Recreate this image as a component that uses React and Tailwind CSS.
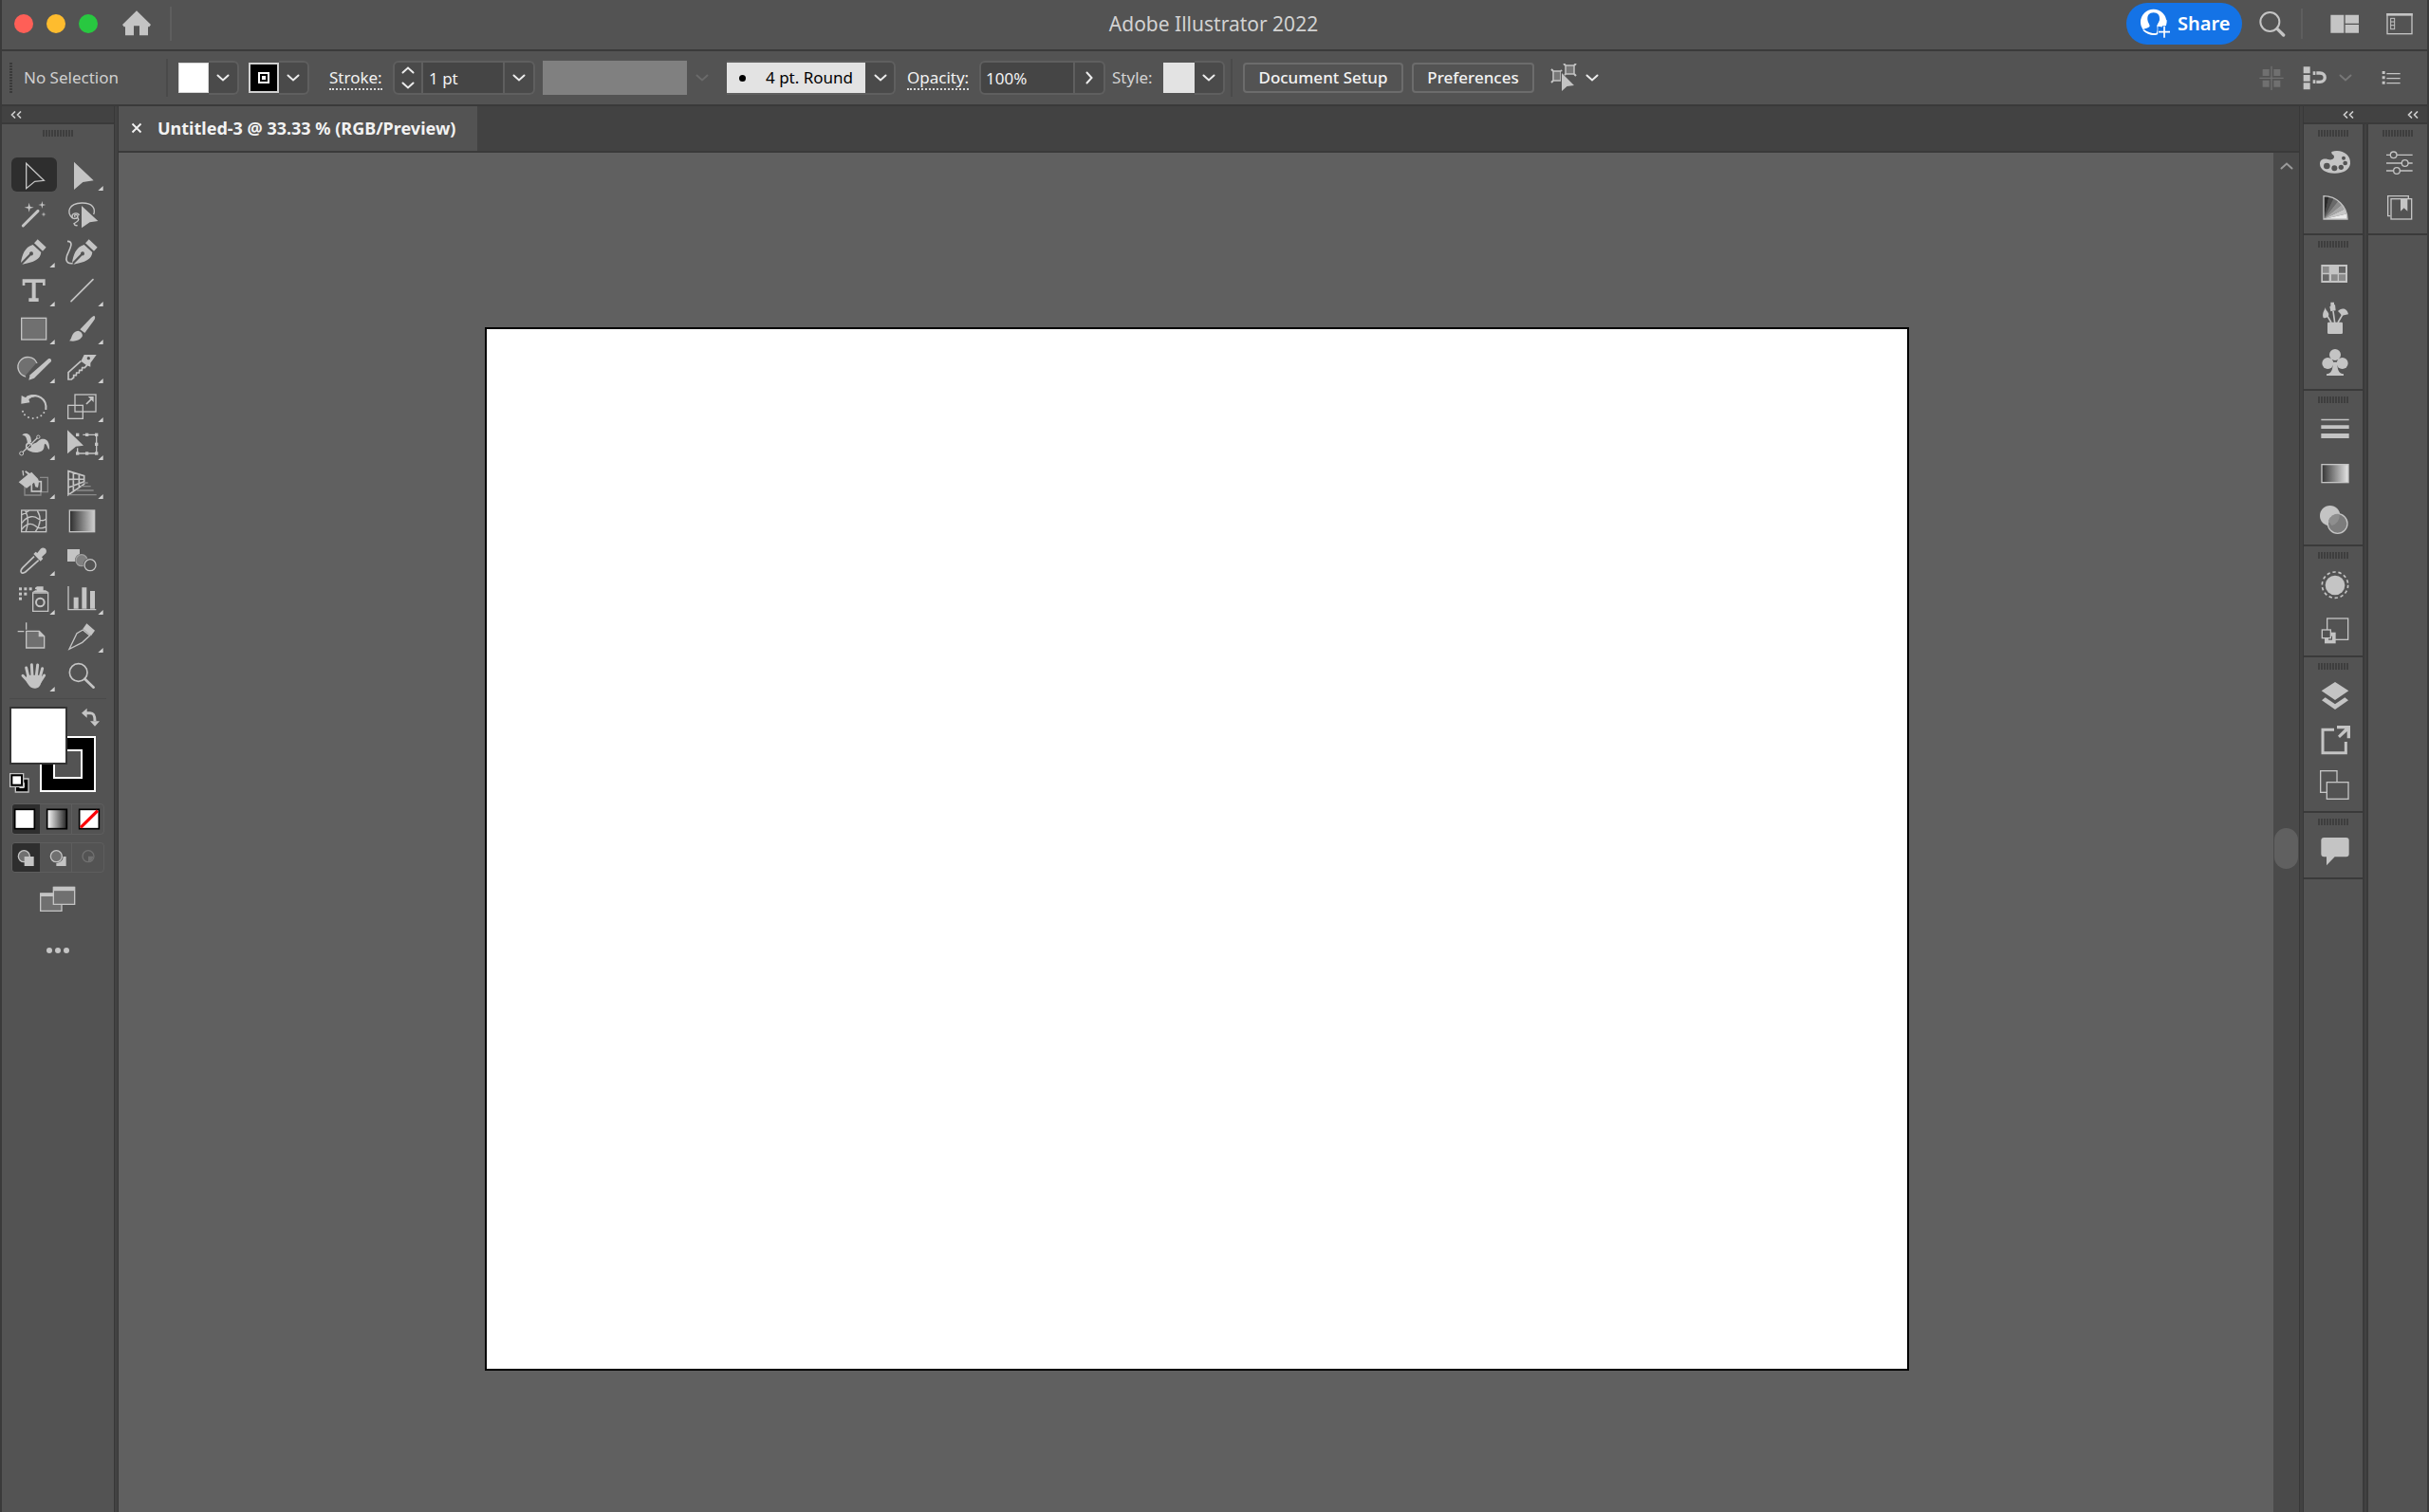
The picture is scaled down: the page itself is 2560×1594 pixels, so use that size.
import React from "react";

const C = "#c4c4c4";

function Star({ x, y, r }) {
  const q = r / 5;
  return (
    <polygon
      fill={C}
      points={`${x},${y - r} ${x + q},${y - q} ${x + r},${y} ${x + q},${y + q} ${x},${y + r} ${x - q},${y + q} ${x - r},${y} ${x - q},${y - q}`}
    />
  );
}

function Nib({ dx }) {
  return (
    <g transform={`translate(${dx} 0)`}>
      <path d="M119 428 L146 453 L135 465 L108 440 Z" fill={C} />
      <path d="M104 445 L130 469 C127 492 108 500 70 507 L98 479 A6 6 0 1 0 93 474 L66 502 C70 478 78 452 104 445 Z" fill={C} />
    </g>
  );
}

function Tool({ label, x, y, menu, active, children }) {
  return (
    <button
      type="button"
      aria-label={label}
      aria-pressed={!!active}
      className={active ? "h-9 w-12 rounded-md bg-[#2e2e2e]" : "h-9 w-12 rounded-md"}
    >
      <svg className="h-9 w-12" viewBox={`${x} ${y} 144 108`} fill="none" stroke="none">
        {children}
        {menu && <polygon fill="#d0d0d0" points={`${x + 137},${y + 90} ${x + 137},${y + 105} ${x + 121},${y + 105}`} />}
      </svg>
    </button>
  );
}

function Tools() {
  const L = 36;
  const R = 189;
  return (
    <div className="grid h-[564px] grid-cols-[48px_48px] content-between gap-x-[3px]">
      <Tool label="Selection" x={L} y={168} active>
        <path d="M83 187 L139 241 L110 244 L83 266 Z" stroke={C} strokeWidth="4" />
      </Tool>
      <Tool label="Direct Selection" x={R} y={168} menu>
        <path d="M234 182 L296 241 L262 246 L234 270 Z" fill={C} />
      </Tool>

      <Tool label="Magic Wand" x={L} y={290}>
        <path d="M73 383 L120 336" stroke={C} strokeWidth="9" strokeLinecap="round" />
        <Star x={92} y={325} r={15} />
        <Star x={133} y={317} r={12} />
        <Star x={138} y={347} r={8} />
      </Tool>
      <Tool label="Lasso" x={R} y={290}>
        <path d="M230 360 C208 340 218 312 258 311 C292 310 303 328 296 347" stroke={C} strokeWidth="4" />
        <path d="M250 350 C248 340 228 342 228 353 C228 364 246 362 246 352 C240 344 232 350 238 355 M246 358 C254 366 240 372 234 376 C236 382 240 383 245 382" stroke={C} strokeWidth="4" />
        <path d="M258 320 L310 368 L284 372 L258 390 Z" fill={C} />
      </Tool>

      <Tool label="Pen" x={L} y={412} menu>
        <Nib dx={0} />
      </Tool>
      <Tool label="Curvature" x={R} y={412}>
        <Nib dx={162} />
        <path d="M213 434 C232 434 224 452 217 467 C207 486 204 506 230 504" stroke={C} strokeWidth="5" />
      </Tool>

      <Tool label="Type" x={L} y={534} menu>
        <path d="M71 553 H143 V573 H135 V564 H113 V613 H122 V624 H91 V613 H101 V564 H79 V573 H71 Z" fill={C} />
      </Tool>
      <Tool label="Line Segment" x={R} y={534} menu>
        <path d="M225 623 L294 554" stroke={C} strokeWidth="5" strokeLinecap="round" />
      </Tool>

      <Tool label="Rectangle" x={L} y={25} menu>
        <rect x="68" y="47" width="78" height="68" fill="#707070" stroke={C} strokeWidth="4" />
      </Tool>
      <Tool label="Paintbrush" x={R} y={25} menu>
        <path d="M298 40 C302 42 301 48 297 54 L268 94 L253 83 L286 48 C290 44 294 41 298 40 Z" fill={C} />
        <path d="M247 87 C258 90 264 99 259 107 C251 119 236 122 219 119 C230 111 223 92 247 87 Z" fill={C} />
      </Tool>

      <Tool label="Shaper" x={L} y={147} menu>
        <path d="M82 231 A31 31 0 1 1 117 190" fill="#707070" stroke={C} strokeWidth="4" />
        <path d="M82 231 L117 190" stroke="#535353" strokeWidth="6" />
        <path d="M153 175 C158 172 165 178 161 184 L108 236 L91 242 L95 226 Z" fill={C} />
      </Tool>
      <Tool label="Eraser" x={R} y={147} menu>
        <path d="M256 182 L266 162 H305 L286 188 V200 L272 194 Z" fill={C} />
        <circle cx="280" cy="173" r="5" fill="#535353" />
        <path d="M256 182 L216 218 V240 H226 L233 234 V227 H241 L242 219 H250 L251 211 H259 L260 203 H268 L276 194" stroke={C} strokeWidth="5" />
      </Tool>

      <Tool label="Rotate" x={L} y={269} menu>
        <path d="M86 299 C118 279 149 300 145 335" stroke={C} strokeWidth="6" />
        <path d="M84 292 C98 285 112 286 120 291 L100 296 L86 305 Z" fill={C} />
        <path d="M68 290 L80 296 L88 292 L94 312 L67 316 Z" fill={C} />
        {[[72, 340], [78, 351], [90, 359], [104, 362], [118, 360], [130, 354], [139, 344]].map(([a, b]) => (
          <circle key={a} cx={a} cy={b} r="3" fill={C} />
        ))}
      </Tool>
      <Tool label="Scale" x={R} y={269} menu>
        <rect x="237" y="287" width="66" height="54" stroke={C} strokeWidth="4" />
        <rect x="215" y="321" width="47" height="42" stroke={C} strokeWidth="4" />
        <path d="M273 317 L290 300" stroke={C} strokeWidth="5" />
        <path d="M278 293 H296 V311 Z" fill={C} />
      </Tool>

      <Tool label="Width" x={L} y={391} menu>
        <path d="M70 416 C84 406 98 416 98 430 C99 440 104 446 112 442 C122 436 124 428 138 429 C150 431 157 440 156 462 C150 462 150 446 142 444 C138 450 142 458 134 466 C118 476 96 474 78 458 C92 452 86 434 82 424 C78 418 74 420 70 416 Z" fill={C} />
        <path d="M68 475 L121 423" stroke="#535353" strokeWidth="9" />
        <path d="M68 475 L121 423" stroke={C} strokeWidth="4" />
        <circle cx="92" cy="452" r="9" fill="#535353" stroke={C} strokeWidth="5" />
        <circle cx="68" cy="475" r="6" fill="#535353" stroke={C} strokeWidth="3" />
        <circle cx="121" cy="423" r="5" fill="#535353" stroke={C} strokeWidth="3" />
        <path d="M86 458 L98 446" stroke={C} strokeWidth="3" />
      </Tool>
      <Tool label="Free Transform" x={R} y={391} menu>
        <path d="M262 416 H305 V475 H245 V458" stroke={C} strokeWidth="4" />
        {[[245, 416], [275, 416], [305, 416], [305, 446], [245, 475], [275, 475], [305, 475]].map(([a, b]) => (
          <rect key={`${a}-${b}`} x={a - 5} y={b - 5} width="10" height="10" fill={C} />
        ))}
        <path d="M213 401 L264 450 L240 453 L213 476 Z" fill={C} />
      </Tool>

      <Tool label="Live Paint Bucket" x={L} y={513} menu>
        <path d="M78 575 V606 H129 V596" stroke="#8a8a8a" strokeWidth="4" />
        <path d="M126 550 H151 V596 H126" stroke="#8a8a8a" strokeWidth="4" />
        <rect x="100" y="563" width="30" height="31" stroke={C} strokeWidth="5" />
        <path d="M59 565 L88 541 L78 532 L82 529 L94 537 L100 533 L120 554 C125 562 122 572 120 582 L112 580 L108 566 L84 584 Z" fill={C} />
        <path d="M72 528 L74 544" stroke={C} strokeWidth="4" />
      </Tool>
      <Tool label="Perspective Grid" x={R} y={513} menu>
        <path d="M216 530 L266 545 V571 L216 605 Z M216 556 L266 555 M216 582 L266 563 M232 535 V594 M250 540 V582" stroke={C} strokeWidth="5" />
        <path d="M264 567 H278 M256 578 H287 M242 591 H296 M218 605 H305" stroke="#8a8a8a" strokeWidth="4" />
      </Tool>

      <Tool label="Mesh" x={L} y={5}>
        <rect x="68" y="26" width="78" height="68" stroke={C} strokeWidth="4" />
        <path d="M80 27 C92 50 90 70 82 93 M118 27 C132 50 128 72 112 93 M69 66 C88 40 110 44 120 52 C130 60 138 60 145 54 M69 86 C84 66 100 66 110 74 C120 84 134 84 145 78 M69 40 C78 36 86 32 92 27" stroke={C} strokeWidth="4" />
      </Tool>
      <Tool label="Gradient" x={R} y={5}>
        <defs>
          <linearGradient id="gradTool"><stop stopColor="#2c2c2c" /><stop offset="1" stopColor="#d0d0d0" /></linearGradient>
        </defs>
        <rect x="220" y="26" width="79" height="68" fill="url(#gradTool)" stroke={C} strokeWidth="4" />
      </Tool>

      <Tool label="Eyedropper" x={L} y={126} menu>
        <path d="M108 170 L72 205 C66 212 64 218 68 221 C73 224 80 221 86 214 L122 182" stroke={C} strokeWidth="5" />
        <path d="M106 162 L113 155 L118 159 L128 146 C138 136 152 148 145 160 L132 172 L136 177 L128 185 Z" fill={C} />
      </Tool>
      <Tool label="Blend" x={R} y={126}>
        <rect x="213" y="147" width="39" height="39" fill={C} />
        <circle cx="258" cy="182" r="21" fill="#535353" />
        <circle cx="258" cy="182" r="18" fill="#808080" stroke="#a0a0a0" strokeWidth="4" />
        <circle cx="285" cy="197" r="22" fill="#535353" />
        <circle cx="285" cy="197" r="18" stroke={C} strokeWidth="4" />
      </Tool>

      <Tool label="Symbol Sprayer" x={L} y={248} menu>
        {[[65, 272], [81, 272], [97, 272], [65, 288], [81, 288], [65, 303]].map(([a, b]) => (
          <rect key={`${a}-${b}`} x={a - 5} y={b - 5} width="9" height="9" fill={C} />
        ))}
        <path d="M111 268 L117 264 H137 V278 H117 V274 L111 272 Z" fill={C} />
        <path d="M104 284 H152 V342 H104 Z" stroke={C} strokeWidth="4" />
        <path d="M102 282 L112 276 H144 L154 282 Z" fill={C} />
        <circle cx="127" cy="314" r="13" stroke={C} strokeWidth="6" />
      </Tool>
      <Tool label="Column Graph" x={R} y={248} menu>
        <path d="M216 263 V337 H304" stroke={C} strokeWidth="4" />
        <path d="M233 298 H248 V334 H233 Z M259 267 H274 V334 H259 Z M285 278 H300 V334 H285 Z" fill={C} />
      </Tool>

      <Tool label="Artboard" x={L} y={370}>
        <path d="M83 380 V402 M56 408 H76" stroke={C} strokeWidth="4" />
        <path d="M83 407 H124 L140 423 V460 H83 Z" fill="#707070" stroke={C} strokeWidth="4" />
        <path d="M122 405 L142 425 H122 Z" fill={C} />
      </Tool>
      <Tool label="Slice" x={R} y={370} menu>
        <path d="M274 383 L300 405 L288 422 L262 400 Z" fill={C} />
        <path d="M262 403 L284 421 L260 443 L219 464 L243 414 Z" stroke={C} strokeWidth="4" />
      </Tool>

      <Tool label="Hand" x={L} y={492} menu>
        <path d="M90 552 L83 522 M102 548 L100 512 M115 548 L119 513 M126 554 L134 524 M88 564 L72 547 M127 566 L140 546" stroke={C} strokeWidth="9" strokeLinecap="round" />
        <path d="M86 545 H131 C134 566 128 586 112 587 C96 588 88 576 80 558 Z" fill={C} />
      </Tool>
      <Tool label="Zoom" x={R} y={492}>
        <circle cx="248" cy="537" r="28" stroke={C} strokeWidth="5" />
        <path d="M268 557 L296 584" stroke={C} strokeWidth="8" strokeLinecap="round" />
      </Tool>
    </div>
  );
}

function Chevron({ className = "text-[#ececec]" }) {
  return (
    <svg className={`h-3 w-4 ${className}`} viewBox="0 0 16 12" fill="none" stroke="currentColor" strokeWidth="2" strokeLinecap="round">
      <path d="M2.5 3.5 L8 8.5 L13.5 3.5" />
    </svg>
  );
}

function DropButton({ label, children }) {
  return (
    <button type="button" aria-label={label} className="grid h-9 w-8 shrink-0 place-items-center rounded-r-md border-2 border-l-0 border-[#5f5f5f] bg-[#4a4a4a]">
      {children || <Chevron />}
    </button>
  );
}

function Rule() {
  return <div className="h-10 w-[2px] shrink-0 bg-[#4a4a4a]" />;
}

function Grip() {
  return (
    <div className="mx-auto h-[7px] w-[33px] bg-[repeating-linear-gradient(90deg,#3e3e3e_0_2px,#535353_2px_3px)]" />
  );
}

function Collapse({ align }) {
  return (
    <button type="button" aria-label="Collapse panels" className={align === "left" ? "mr-auto ml-[9px]" : "ml-auto mr-[9px]"}>
      <svg className="h-2 w-3" viewBox="0 0 12 8" fill="none" stroke="#cfcfcf" strokeWidth="1.6">
        <path d="M5 0.5 L1.5 4 L5 7.5 M11 0.5 L7.5 4 L11 7.5" />
      </svg>
    </button>
  );
}

function TitleBar() {
  return (
    <header className="grid h-[54px] shrink-0 grid-cols-[1fr_auto_1fr] items-center border-b-2 border-[#3a3a3a] pr-[15px] pb-[3px] pl-[13px]">
      <div className="flex items-center">
        <div className="flex gap-[14px]">
          <button type="button" aria-label="Close window" className="size-5 rounded-full bg-[#ff5f57]" />
          <button type="button" aria-label="Minimize window" className="size-5 rounded-full bg-[#febc2e]" />
          <button type="button" aria-label="Zoom window" className="size-5 rounded-full bg-[#28c840]" />
        </div>
        <button type="button" aria-label="Home" className="ml-[26px]">
          <svg className="h-7 w-[30px]" viewBox="387 32 90 84" fill={C}>
            <path d="M432 33 L477 77 L472 84 H468 V111 H441 V81 H423 V111 H396 V84 H392 L387 77 Z" />
          </svg>
        </button>
        <div className="ml-5 h-9 w-[2px] bg-[#5e5e5e]" />
      </div>
      <h1 className="text-[21px] leading-7 text-[#d2d2d2]">Adobe Illustrator 2022</h1>
      <div className="flex items-center justify-end">
        <button type="button" className="flex h-11 w-[122px] items-center rounded-full bg-[#1473e6] pl-[14px] text-xl font-semibold text-white">
          <svg className="mr-2 h-8 w-8 shrink-0" viewBox="162 25 96 96">
            <circle cx="206" cy="68" r="41" fill="#fff" />
            <path d="M206 38 C192 38 186 47 187 60 C188 69 193 73 194 80 C192 88 178 88 172 92 C184 104 200 108 214 104 C218 98 219 92 217 80 C218 73 225 69 225 60 C226 47 220 38 206 38 Z" fill="#1473e6" />
            <path d="M174 93 C186 103 196 106 214 106" fill="none" stroke="#fff" strokeWidth="5" />
            <path d="M220 80 H258 V120 H220 Z" fill="#1473e6" />
            <path d="M217 80 C228 84 240 86 246 78 L248 62 L226 62 Z" fill="#fff" />
            <path d="M240 80 V118 M221 99 H258" fill="none" stroke="#1473e6" strokeWidth="13" />
            <path d="M240 81 V117 M222 99 H258" fill="none" stroke="#fff" strokeWidth="5" />
          </svg>
          Share
        </button>
        <button type="button" aria-label="Search" className="ml-[18px]">
          <svg className="size-7" viewBox="540 28 84 84" fill="none" stroke={C}>
            <circle cx="574" cy="64" r="30" strokeWidth="6" />
            <path d="M597 86 L617 106" strokeWidth="10" strokeLinecap="round" />
          </svg>
        </button>
        <div className="ml-4 h-8 w-[2px] bg-[#5e5e5e]" />
        <button type="button" aria-label="Arrange documents" className="ml-[29px]">
          <svg className="h-5 w-[30px]" viewBox="768 43 90 60" fill={C}>
            <path d="M769 45 H811 V102 H769 Z M815 45 H858 V72 H815 Z M815 76 H858 V102 H815 Z" />
          </svg>
        </button>
        <button type="button" aria-label="Workspace" className="ml-[29px]">
          <svg className="h-6 w-7" viewBox="946 38 84 72" fill="none" stroke={C} strokeWidth="4">
            <rect x="949" y="43" width="78" height="63" />
            <path d="M947 45 H1029" strokeWidth="8" />
            <rect x="960" y="57" width="12" height="34" strokeWidth="3" />
            <path d="M960 68 H972 M960 79 H972" strokeWidth="3" />
          </svg>
        </button>
      </div>
    </header>
  );
}

function ControlBar() {
  return (
    <div className="flex h-[58px] shrink-0 items-center border-b-2 border-[#3a3a3a] pr-[28px] pl-2 text-[17px] text-[#f2f2f2]">
      <div className="h-8 w-[3px] shrink-0 bg-[repeating-linear-gradient(180deg,#3a3a3a_0_2px,#535353_2px_3px)]" />
      <span className="ml-3 w-[150px] shrink-0 whitespace-nowrap text-[#cfcfcf]">No Selection</span>
      <Rule />
      <button type="button" aria-label="Fill colour" className="ml-[11px] size-8 shrink-0 border border-[#d8d8d8] bg-white" />
      <DropButton label="Fill options" />
      <button type="button" aria-label="Stroke colour" className="ml-[10px] grid size-8 shrink-0 place-items-center border-2 border-[#d0d0d0] bg-black">
        <span className="grid size-3 place-items-center border-2 border-white">
          <span className="size-1 bg-white" />
        </span>
      </button>
      <DropButton label="Stroke options" />
      <label htmlFor="weight" className="ml-[21px] w-[67px] shrink-0 leading-6">
        <span className="border-b-2 border-dotted border-[#d8d8d8]">Stroke:</span>
      </label>
      <div className="flex shrink-0">
        <div className="grid h-9 w-8 place-items-center rounded-l-md border-2 border-[#5f5f5f] bg-[#4a4a4a]">
          <button type="button" aria-label="Increase weight" className="rotate-180"><Chevron /></button>
          <button type="button" aria-label="Decrease weight"><Chevron /></button>
        </div>
        <input id="weight" defaultValue="1 pt" className="h-9 w-[86px] border-y-2 border-r-2 border-[#5f5f5f] bg-[#454545] pl-[6px]" />
        <DropButton label="Weight presets" />
      </div>
      <div className="ml-2 grid h-9 w-[184px] shrink-0 grid-cols-[152px_32px] items-center">
        <select disabled aria-label="Variable width profile" className="col-span-2 col-start-1 row-start-1 h-9 w-[152px] appearance-none bg-[#808080]" />
        <span className="col-start-2 row-start-1 grid place-items-center"><Chevron className="text-[#6a6a6a]" /></span>
      </div>
      <div className="ml-[10px] grid h-9 w-[178px] shrink-0 grid-cols-[146px_32px] items-center rounded-r-md border-2 border-l-0 border-[#5f5f5f] bg-[#4a4a4a] text-black">
        <select aria-label="Brush definition" className="col-span-2 col-start-1 row-start-1 h-8 w-[146px] appearance-none bg-[#e3e3e3] pl-[41px]">
          <option>4 pt. Round</option>
        </select>
        <span className="pointer-events-none col-start-1 row-start-1 ml-[13px] size-[7px] rounded-full bg-black" />
        <span className="pointer-events-none col-start-2 row-start-1 grid place-items-center"><Chevron /></span>
      </div>
      <label htmlFor="opacity" className="ml-[12px] w-[76px] shrink-0 leading-6">
        <span className="border-b-2 border-dotted border-[#d8d8d8]">Opacity:</span>
      </label>
      <div className="flex shrink-0">
        <input id="opacity" defaultValue="100%" className="h-9 w-[101px] rounded-l-md border-2 border-[#5f5f5f] bg-[#454545] pl-[5px]" />
        <DropButton label="Opacity slider">
          <span className="-rotate-90"><Chevron /></span>
        </DropButton>
      </div>
      <span className="ml-[7px] w-[54px] shrink-0 text-[#d2d2d2]">Style:</span>
      <button type="button" aria-label="Graphic style" className="h-8 w-[33px] shrink-0 bg-[#e3e3e3]" />
      <DropButton label="Style options" />
      <div className="ml-[6px]"><Rule /></div>
      <button type="button" className="ml-[11px] h-8 w-[169px] shrink-0 rounded border-2 border-[#6c6c6c] leading-7 font-medium">Document Setup</button>
      <button type="button" className="ml-[9px] h-8 w-[129px] shrink-0 rounded border-2 border-[#6c6c6c] leading-7 font-medium">Preferences</button>
      <button type="button" aria-label="Select similar" className="ml-[17px] flex shrink-0 items-center gap-2">
        <svg className="h-[30px] w-7" viewBox="0 0 28 30">
          <path d="M3 8 H11 V18 H3 Z M16 2 H25 V11 H16 Z" fill="#777" stroke={C} strokeWidth="1.5" />
          <path d="M1 6 L3 8 M1 20 L3 18 M11 8 L12 7 M14 0 L16 2 M27 0 L25 2 M27 13 L25 11 M16 11 L14 13" stroke={C} strokeWidth="2" />
          <path d="M11 8 L26 23 L18 24 L11 30 Z" fill="#535353" />
          <path d="M12 10 L25 23 L17.500 24 L12 29 Z" fill={C} />
        </svg>
        <Chevron />
      </button>
      <div className="ml-auto flex shrink-0 items-center">
        <button type="button" aria-label="Align to pixel grid">
          <svg className="size-[26px]" viewBox="545 201 78 78" fill="#707070">
            <path d="M556 213 H577 V234 H556 Z M591 213 H612 V234 H591 Z M556 248 H577 V269 H556 Z M591 248 H612 V269 H591 Z M582 203 H586 V279 H582 Z M546 239 H622 V243 H546 Z" />
          </svg>
        </button>
        <button type="button" aria-label="Snap options" className="ml-5 flex items-center gap-[11px]">
          <svg className="size-[26px]" viewBox="682 203 78 78">
            <path d="M684 207 H705 V228 H684 Z M684 233 H705 V253 H684 Z M684 258 H705 V279 H684 Z M714 222 H722 V233 H714 Z M714 249 H722 V260 H714 Z" fill={C} />
            <path d="M725 227 H736 C757 227 757 255 736 255 H725" fill="none" stroke={C} strokeWidth="10" />
          </svg>
          <Chevron className="text-[#777777]" />
        </button>
        <button type="button" aria-label="Control bar menu" className="ml-[30px]">
          <svg className="h-4 w-5" viewBox="931 220 60 48" fill={C}>
            <path d="M933 223 H942 V232 H933 Z M933 239 H942 V248 H933 Z M933 255 H942 V264 H933 Z M947 229 H990 V233 H947 Z M947 244 H990 V248 H947 Z M947 259 H990 V263 H947 Z" />
          </svg>
        </button>
      </div>
    </div>
  );
}

function ColourControls() {
  return (
    <div className="relative h-[91px] w-24">
      <button type="button" aria-label="Stroke" className="absolute top-[31px] left-8 size-[59px]">
        <svg className="size-full" viewBox="0 0 59 59">
          <path fillRule="evenodd" d="M1 1 H58 V58 H1 Z M15 15 H44 V44 H15 Z" fill="#000" stroke="#fff" strokeWidth="2" />
        </svg>
      </button>
      <button type="button" aria-label="Fill" className="absolute top-0 left-0 size-[61px] border-2 border-[#333333] bg-white" />
      <button type="button" aria-label="Swap fill and stroke" className="absolute top-[1px] right-0">
        <svg className="size-5" viewBox="257 47 60 60">
          <path d="M272 64 H284 C296 64 299 72 299 90" fill="none" stroke={C} strokeWidth="9" />
          <path d="M257 64 L274 49 V79 Z M299 106 L284 90 H314 Z" fill={C} />
        </svg>
      </button>
      <button type="button" aria-label="Default fill and stroke" className="absolute bottom-0 left-0">
        <svg className="size-[21px]" viewBox="30 251 63 63">
          <path d="M49 269 H90 V311 H49 Z" fill="#000" stroke={C} strokeWidth="4" />
          <path d="M62 282 H76 V297 H62 Z" fill="#535353" stroke="#fff" strokeWidth="3" />
          <path d="M32 253 H74 V294 H32 Z" fill="#000" stroke={C} strokeWidth="4" />
          <path d="M40 261 H66 V286 H40 Z" fill="#fff" />
        </svg>
      </button>
    </div>
  );
}

function ToolPanel() {
  return (
    <aside className="flex w-[118px] shrink-0 flex-col">
      <div className="flex h-[19px] items-center border-b-2 border-[#3a3a3a] bg-[#424242]">
        <Collapse align="left" />
      </div>
      <div className="pt-[6px]"><Grip /></div>
      <div className="mt-[22px] ml-[10px]"><Tools /></div>
      <div className="mx-2 mt-[6px] h-px bg-[#4a4a4a]" />
      <div className="mt-2 ml-2"><ColourControls /></div>
      <div className="mt-[11px] ml-[10px] flex h-[33px] w-[98px] overflow-hidden rounded border border-[#5e5e5e]">
        <button type="button" aria-label="Colour" className="w-[29px] bg-[#2e2e2e]">
          <svg className="h-[31px] w-[29px]" viewBox="39 355 87 93"><rect x="47" y="371" width="62" height="61" fill="#fff" stroke="#000" strokeWidth="5" /></svg>
        </button>
        <button type="button" aria-label="Gradient fill" className="w-[34px] border-r border-[#5e5e5e]">
          <svg className="h-[31px] w-[33px]" viewBox="126 355 99 93">
            <defs><linearGradient id="gradMode"><stop stopColor="#fff" /><stop offset="1" stopColor="#222" /></linearGradient></defs>
            <rect x="149" y="371" width="62" height="61" fill="url(#gradMode)" stroke="#000" strokeWidth="5" />
          </svg>
        </button>
        <button type="button" aria-label="None" className="w-[33px]">
          <svg className="h-[31px] w-[33px]" viewBox="228 355 99 93">
            <rect x="251" y="371" width="62" height="61" fill="#fff" stroke="#000" strokeWidth="5" />
            <path d="M255 428 L309 375" stroke="#fb0007" strokeWidth="10" />
          </svg>
        </button>
      </div>
      <div className="mt-2 ml-[10px] flex h-8 w-[98px] overflow-hidden rounded border border-[#5e5e5e]">
        <button type="button" aria-label="Draw normal" className="w-[29px] bg-[#2e2e2e]">
          <svg className="h-[30px] w-[29px]" viewBox="39 479 87 90">
            <circle cx="76" cy="520" r="18" fill="#707070" stroke={C} strokeWidth="4" />
            <rect x="77" y="521" width="30" height="30" fill={C} />
          </svg>
        </button>
        <button type="button" aria-label="Draw behind" className="w-[34px] border-r border-[#5e5e5e]">
          <svg className="h-[30px] w-[33px]" viewBox="126 479 99 90">
            <rect x="178" y="521" width="31" height="30" fill={C} />
            <circle cx="178" cy="520" r="22" fill="#535353" />
            <circle cx="178" cy="520" r="18" fill="#707070" stroke={C} strokeWidth="4" />
          </svg>
        </button>
        <button type="button" aria-label="Draw inside" className="w-[33px]" disabled>
          <svg className="h-[30px] w-[33px]" viewBox="228 479 99 90">
            <circle cx="279" cy="520" r="18" fill="none" stroke="#707070" strokeWidth="4" />
            <path d="M279 520 H295 C294 530 288 536 279 537 Z" fill="#707070" />
          </svg>
        </button>
      </div>
      <button type="button" aria-label="Screen mode" className="mt-[14px] ml-10">
        <svg className="h-7 w-[38px]" viewBox="127 612 114 84" fill="#707070" stroke={C} strokeWidth="4">
          <path d="M129 636 H196 V691 H129 Z" /><path d="M129 640 H196" strokeWidth="10" />
          <path d="M170 616 H237 V670 H170 Z" /><path d="M170 621 H237" strokeWidth="13" />
        </svg>
      </button>
      <button type="button" aria-label="Edit toolbar" className="mt-[34px] ml-[47px] flex h-[12px] items-center gap-[3px]">
        <span className="size-[6px] rounded-full bg-[#c4c4c4]" />
        <span className="size-[6px] rounded-full bg-[#c4c4c4]" />
        <span className="size-[6px] rounded-full bg-[#c4c4c4]" />
      </button>
    </aside>
  );
}

function Divider() {
  return <div className="w-[5px] shrink-0 border-x border-[#383838] bg-[#424242]" />;
}

function Workspace() {
  return (
    <main className="flex min-w-0 flex-1 flex-col">
      <div className="flex h-[49px] shrink-0 border-b-2 border-[#3a3a3a] bg-[#424242]" role="tablist">
        <div className="flex w-[378px] items-center bg-[#535353] pb-[2px]">
          <button type="button" aria-label="Close document" className="ml-[13px]">
            <svg className="size-3" viewBox="0 0 12 12" stroke="#f2f2f2" strokeWidth="1.8"><path d="M1.500 1.500 L10.500 10.500 M10.500 1.500 L1.500 10.500" /></svg>
          </button>
          <button type="button" role="tab" aria-selected="true" className="ml-4 text-lg font-bold whitespace-nowrap text-[#f2f2f2]">
            Untitled-3 @ 33.33 % (RGB/Preview)
          </button>
        </div>
      </div>
      <div className="flex min-h-0 flex-1">
        <div className="flex min-w-0 flex-1 justify-center overflow-hidden bg-[#606060] pt-46 pl-[2px]">
          <div className="h-[1100px] w-[1501px] shrink-0 border-2 border-black bg-white" />
        </div>
        <div className="flex w-[27px] shrink-0 flex-col items-center bg-[#4a4a4a]">
          <button type="button" aria-label="Scroll up" className="mt-2 rotate-180"><Chevron className="text-[#9a9a9a]" /></button>
          <div className="mt-[692px] h-[43px] w-[25px] rounded-full bg-[#606060]" />
        </div>
      </div>
    </main>
  );
}

function PanelIcon({ label, x = 144, y, children }) {
  return (
    <button type="button" aria-label={label} className="block h-[47px] w-[62px]">
      <svg className="h-[47px] w-[62px]" viewBox={`${x} ${y} 186 141`} fill="none">{children}</svg>
    </button>
  );
}

function Group({ children }) {
  return (
    <section className="border-b-2 border-[#3a3a3a] pt-[6px]">
      <Grip />
      <div className="pt-2">{children}</div>
    </section>
  );
}

function Fan() {
  const shades = ["#2a2a2a", "#4a4a4a", "#6a6a6a", "#8a8a8a", "#a8a8a8", "#c8c8c8", "#ececec"];
  return shades.map((s, i) => {
    const a = ((90 - (i * 90) / 7) * Math.PI) / 180;
    const b = ((90 - ((i + 1) * 90) / 7) * Math.PI) / 180;
    return (
      <polygon key={s} fill={s} points={`207,363 ${207 + 74 * Math.cos(a)},${363 - 74 * Math.sin(a)} ${207 + 74 * Math.cos(b)},${363 - 74 * Math.sin(b)}`} />
    );
  });
}

function MainDock() {
  return (
    <div className="w-[62px]">
      <Group>
        <PanelIcon label="Color" y={126}>
          <path d="M232 150 C262 140 294 158 291 188 C288 208 266 219 240 218 C214 217 195 206 195 188 C195 176 206 170 220 174 C232 177 240 174 240 166 C240 158 230 160 232 150 Z" fill={C} />
          <g fill="#535353">
            <circle cx="217" cy="195" r="10" /><circle cx="241" cy="202" r="9" /><circle cx="262" cy="199" r="8" /><circle cx="275" cy="186" r="7" /><circle cx="270" cy="170" r="6" />
          </g>
        </PanelIcon>
        <PanelIcon label="Color Guide" y={267}>
          <Fan />
          <path d="M207 290 C248 290 281 322 282 363 H207 Z" stroke={C} strokeWidth="4" />
        </PanelIcon>
      </Group>
      <Group>
        <PanelIcon label="Swatches" y={477}>
          <rect x="199" y="507" width="83" height="57" fill={C} />
          <path d="M204 513 H224 V533 H204 Z M231 538 H251 V558 H231 Z M255 538 H276 V558 H255 Z" fill="#8a8a8a" />
          <path d="M255 513 H276 V533 H255 Z M204 538 H224 V558 H204 Z" fill="#666666" />
        </PanelIcon>
        <PanelIcon label="Brushes" y={618}>
          <rect x="219" y="689" width="48" height="37" rx="4" fill={C} />
          <path d="M218 668 L231 690 M237 654 L242 690 M267 664 L252 690" stroke={C} strokeWidth="5" />
          <path d="M213 642 C206 656 202 664 206 675 C216 678 224 672 223 664 C222 655 212 652 213 642 Z M229 626 H240 V634 H243 L245 652 L229 655 L226 640 L229 638 Z M252 654 C262 642 282 644 285 664 L264 668 C260 662 256 658 252 654 Z" fill={C} />
        </PanelIcon>
        <PanelIcon label="Symbols" y={759}>
          <path d="M236 815 H250 C250 840 254 850 270 853 V858 H216 V853 C232 850 236 840 236 815 Z" fill={C} />
          <circle cx="243" cy="792" r="18" fill={C} /><circle cx="220" cy="819" r="18" fill={C} /><circle cx="266" cy="819" r="18" fill={C} />
        </PanelIcon>
      </Group>
      <Group>
        <PanelIcon label="Stroke panel" y={99}>
          <path d="M199 125 H287 V130 H199 Z M199 145 H287 V156 H199 Z M199 171 H287 V186 H199 Z" fill={C} />
        </PanelIcon>
        <PanelIcon label="Gradient panel" y={240}>
          <defs><linearGradient id="gradDock"><stop stopColor="#333" /><stop offset="1" stopColor="#e6e6e6" /></linearGradient></defs>
          <rect x="201" y="269" width="84" height="57" fill="url(#gradDock)" stroke={C} strokeWidth="4" />
        </PanelIcon>
        <PanelIcon label="Transparency" y={381}>
          <circle cx="227" cy="431" r="32" fill={C} />
          <circle cx="251" cy="456" r="31" fill="#7c7c7c" stroke={C} strokeWidth="4" />
          <path d="M222 447 A31 31 0 0 1 257 426 A32 32 0 0 1 232 462 Z" fill="#8e8e8e" />
        </PanelIcon>
      </Group>
      <Group>
        <PanelIcon label="Appearance" y={591}>
          <circle cx="243" cy="651" r="31" fill={C} />
          <circle cx="243" cy="650" r="41" stroke={C} strokeWidth="5" strokeDasharray="10.1 8.3" />
        </PanelIcon>
        <PanelIcon label="Graphic Styles" y={732}>
          <rect x="218" y="756" width="66" height="67" stroke={C} strokeWidth="4" />
          <path d="M210 800 H245 V835 H210 Z" fill={C} />
          <path d="M222 812 H234 V824 H222 Z" fill="#535353" />
          <rect x="202" y="792" width="27" height="26" fill="#535353" stroke={C} strokeWidth="4" />
        </PanelIcon>
      </Group>
      <Group>
        <PanelIcon label="Layers" y={72}>
          <path d="M243 87 L286 115 L243 144 L200 115 Z M212 136 L243 157 L274 136 L285 145 L243 174 L201 145 Z" fill={C} />
        </PanelIcon>
        <PanelIcon label="Asset Export" y={213}>
          <path d="M240 238 H204 V311 H277 V276" stroke={C} strokeWidth="9" />
          <path d="M249 225 H291 V265 H281 V243 L258 264 L252 257 L274 235 H249 Z" fill={C} />
        </PanelIcon>
        <PanelIcon label="Artboards" y={354}>
          <rect x="197" y="368" width="52" height="68" stroke={C} strokeWidth="4" />
          <rect x="217" y="404" width="68" height="53" fill="#535353" stroke={C} strokeWidth="4" />
        </PanelIcon>
      </Group>
      <Group>
        <PanelIcon label="Comments" y={564}>
          <path d="M208 579 H278 Q287 579 287 588 V631 Q287 640 278 640 H242 L216 667 V640 H208 Q199 640 199 631 V588 Q199 579 208 579 Z" fill={C} />
        </PanelIcon>
      </Group>
    </div>
  );
}

function SideDock() {
  return (
    <div className="w-[62px]">
      <Group>
        <PanelIcon label="Properties" x={348} y={126}>
          <path d="M405 160 H488 M405 186 H488 M405 210 H488" stroke={C} strokeWidth="4" />
          <g fill="#535353" stroke={C} strokeWidth="4"><circle cx="428" cy="160" r="10" /><circle cx="464" cy="186" r="10" /><circle cx="438" cy="210" r="10" /></g>
        </PanelIcon>
        <PanelIcon label="Libraries" x={348} y={267}>
          <path d="M418 353 H410 V290 H475 V298" stroke={C} strokeWidth="4" />
          <rect x="420" y="299" width="65" height="64" stroke={C} strokeWidth="4" />
          <path d="M450 299 H472 V338 L461 328 L450 338 Z" fill={C} />
        </PanelIcon>
      </Group>
    </div>
  );
}

function Docks() {
  return (
    <aside className="flex shrink-0 flex-col">
      <div className="flex h-[19px] shrink-0 border-b-2 border-[#3a3a3a] bg-[#424242]">
        <div className="flex w-[62px] items-center"><Collapse align="right" /></div>
        <div className="ml-[6px] flex w-[62px] items-center"><Collapse align="right" /></div>
      </div>
      <div className="flex flex-1">
        <MainDock />
        <div className="w-[6px] border-x-2 border-[#3a3a3a] bg-[#424242]" />
        <SideDock />
      </div>
    </aside>
  );
}

export default function App() {
  return (
    <div className="flex h-screen w-full flex-col overflow-hidden border-x-2 border-[#3a3a3a] bg-[#535353] font-['Noto_Sans','Open_Sans',sans-serif]">
      <TitleBar />
      <ControlBar />
      <div className="flex min-h-0 flex-1">
        <ToolPanel />
        <Divider />
        <Workspace />
        <Divider />
        <Docks />
      </div>
    </div>
  );
}
